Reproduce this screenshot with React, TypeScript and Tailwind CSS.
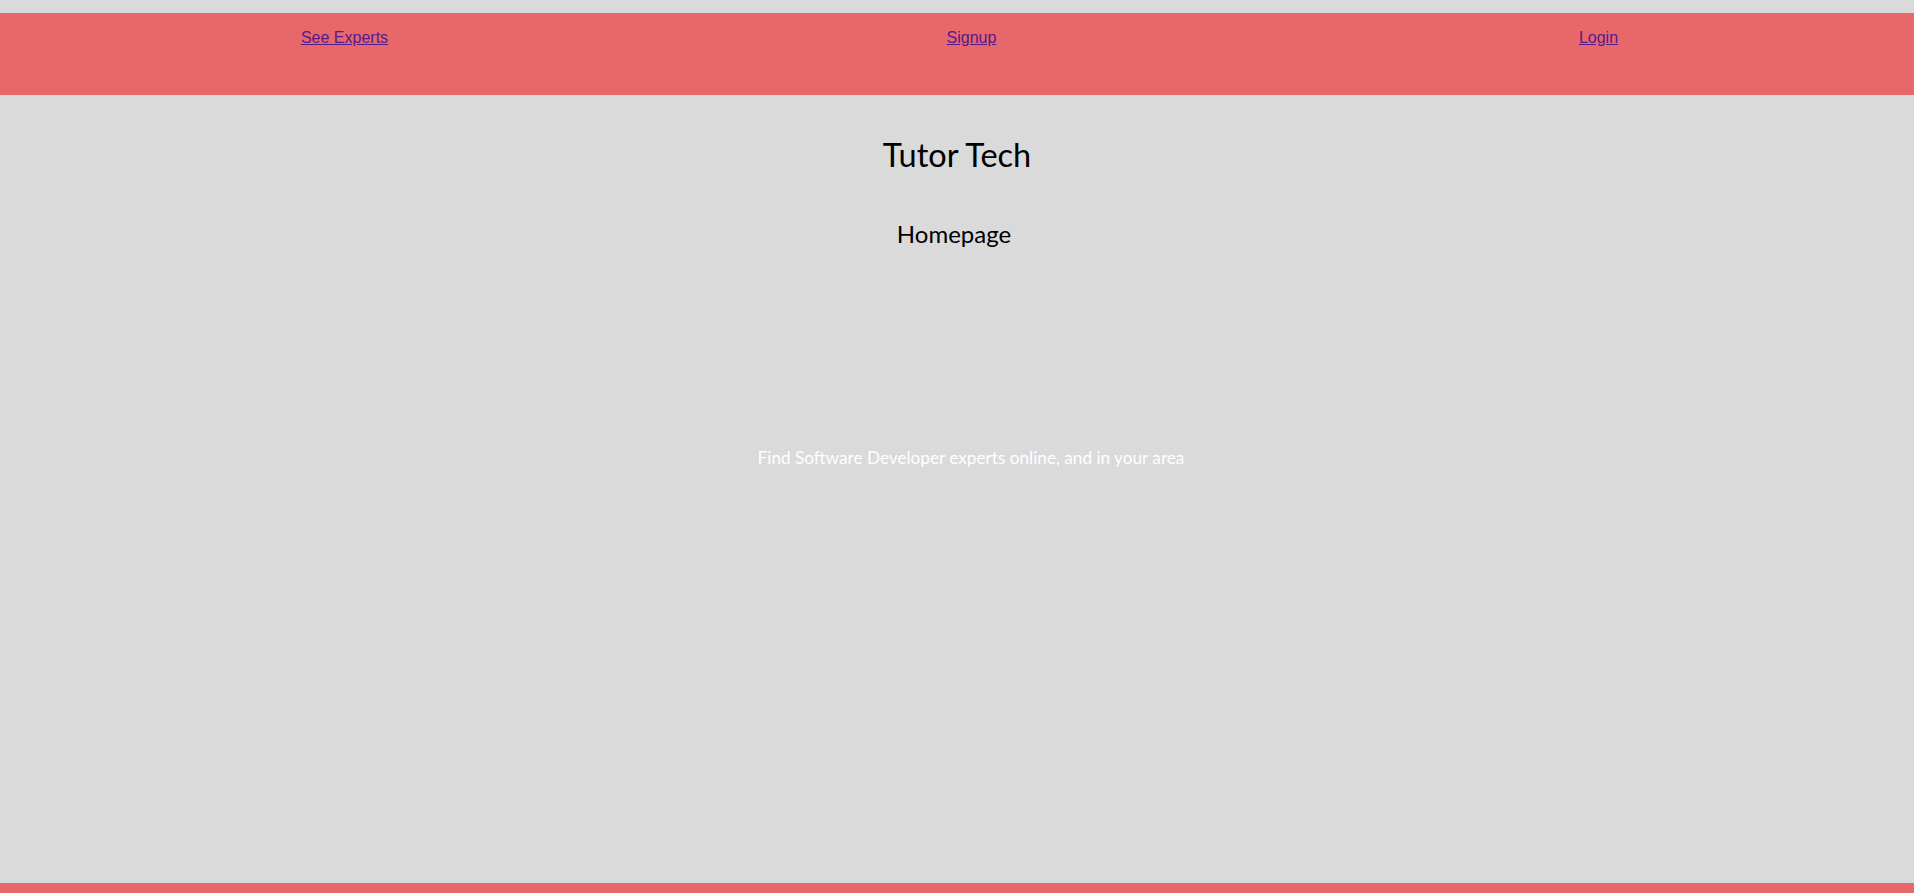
export default function App() {
  return (
    <div className="min-h-screen bg-[#dadada] pt-[13px] flex flex-col">
      <nav className="h-[82px] bg-[#e8676a] grid grid-cols-3 pl-[31px] pr-[2px] pt-[16px] text-center font-['Liberation_Sans',Arial,sans-serif] text-[16px] leading-[18px]">
        <div>
          <a href="#" className="text-[#551a8b] underline">
            See Experts
          </a>
        </div>
        <div>
          <a href="#" className="text-[#551a8b] underline">
            Signup
          </a>
        </div>
        <div>
          <a href="#" className="text-[#551a8b] underline">
            Login
          </a>
        </div>
      </nav>

      <main className="flex-1 flex flex-col items-center font-['Lato',sans-serif]">
        <h1 className="mt-[40px] text-[32.5px] leading-[39px] text-black">Tutor Tech</h1>
        <h2 className="mt-[45px] text-[24px] leading-[29px] text-black -translate-x-[3px]">Homepage</h2>
        <p className="mt-[199px] pl-[28px] text-[17.2px] leading-[21px] text-white">
          Find Software Developer experts online, and in your area
        </p>
      </main>

      <footer className="h-[10px] bg-[#e8676a]" />
    </div>
  );
}
